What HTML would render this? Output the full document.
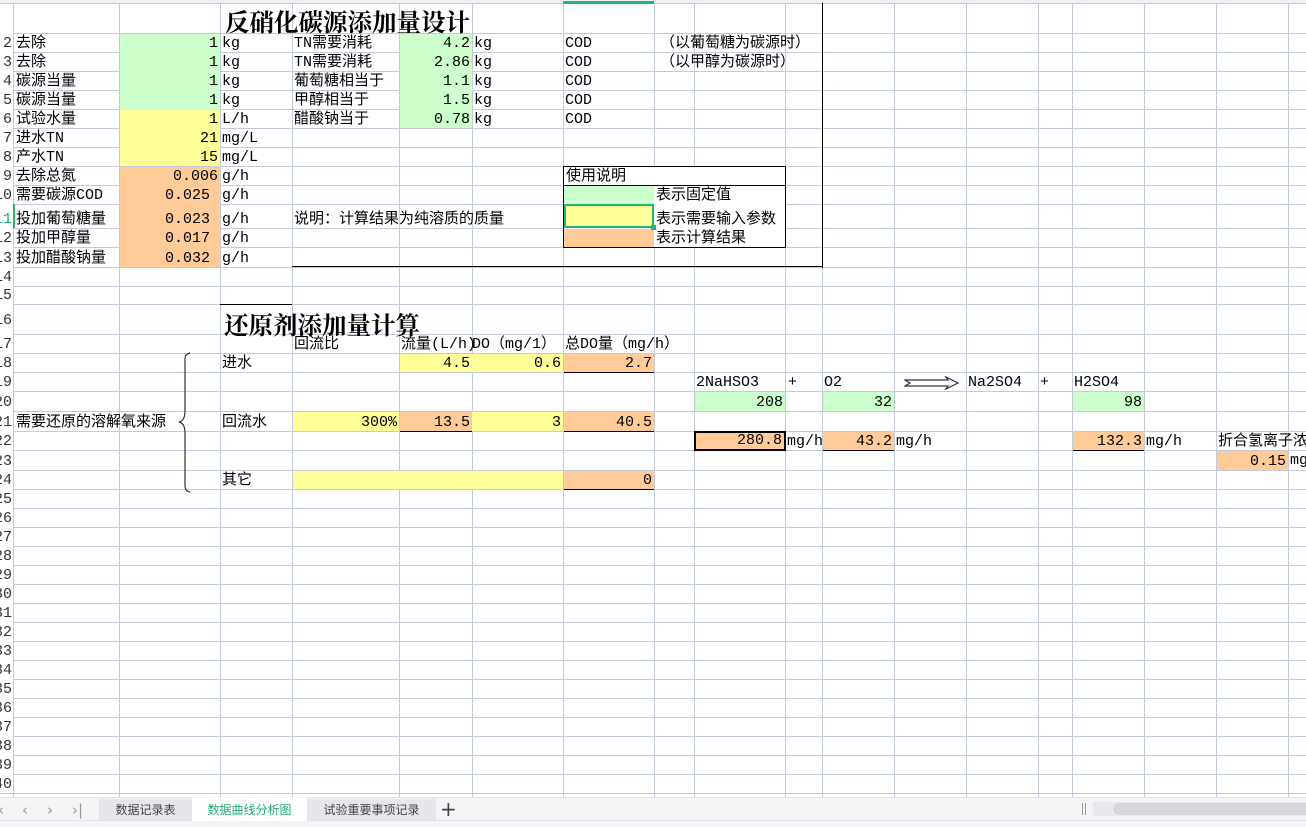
<!DOCTYPE html>
<html><head><meta charset="utf-8">
<style>
*{margin:0;padding:0}
body{width:1306px;height:827px;overflow:hidden;background:#fff;position:relative;font-family:"Liberation Mono","Noto Sans CJK SC",sans-serif}
.v{position:absolute;top:0;height:797px;width:1px;background:#c3cad9}
.h{position:absolute;left:0;width:1306px;height:1px;background:#c3cad9}
.c{position:absolute;display:flex;align-items:flex-end;font-size:15px;line-height:15px;color:#000;white-space:nowrap;padding:0 2px 1px;box-sizing:border-box;z-index:2}
.r{justify-content:flex-end}
.g{background:#ccffcc}.y{background:#ffff99}.o{background:#ffcc99}
.bb{border-bottom:1px solid #000}
.rn{position:absolute;left:0;width:13px;overflow:hidden;z-index:3;background:#fff}
.rn span{position:absolute;right:1px;bottom:1px;font-size:15px;line-height:15px;color:#333}
.t{position:absolute;font-family:"Liberation Serif","Noto Serif CJK SC",serif;font-weight:bold;font-size:24.5px;z-index:2;white-space:nowrap}
.blk{position:absolute;background:#000;z-index:4}
</style></head><body>

<div class="v" style="left:13px"></div><div class="v" style="left:119px"></div><div class="v" style="left:220px"></div><div class="v" style="left:292px"></div><div class="v" style="left:399px"></div><div class="v" style="left:472px"></div><div class="v" style="left:563px"></div><div class="v" style="left:654px"></div><div class="v" style="left:694px"></div><div class="v" style="left:785px"></div><div class="v" style="left:822px"></div><div class="v" style="left:894px"></div><div class="v" style="left:966px"></div><div class="v" style="left:1038px"></div><div class="v" style="left:1072px"></div><div class="v" style="left:1144px"></div><div class="v" style="left:1216px"></div><div class="v" style="left:1288px"></div>

<div class="h" style="top:3px"></div><div class="h" style="top:33px"></div><div class="h" style="top:52px"></div><div class="h" style="top:71px"></div><div class="h" style="top:90px"></div><div class="h" style="top:109px"></div><div class="h" style="top:128px"></div><div class="h" style="top:147px"></div><div class="h" style="top:166px"></div><div class="h" style="top:185px"></div><div class="h" style="top:204px"></div><div class="h" style="top:228px"></div><div class="h" style="top:247px"></div><div class="h" style="top:267px"></div><div class="h" style="top:286px"></div><div class="h" style="top:304px"></div><div class="h" style="top:334px"></div><div class="h" style="top:353px"></div><div class="h" style="top:372px"></div><div class="h" style="top:391px"></div><div class="h" style="top:411px"></div><div class="h" style="top:431px"></div><div class="h" style="top:450px"></div><div class="h" style="top:470px"></div>
<div style="position:absolute;left:0;top:489px;width:1306px;height:308px;background:repeating-linear-gradient(to bottom,#c3cad9 0,#c3cad9 1px,transparent 1px,transparent 19px)"></div>

<div style="position:absolute;left:0;top:0;width:1306px;height:3px;background:#eef0f4;z-index:3"></div>
<div style="position:absolute;left:563px;top:1px;width:91px;height:3px;background:#22b573;z-index:4"></div>

<div class="rn" style="top:33px;height:19px"><span>2</span></div><div class="rn" style="top:52px;height:19px"><span>3</span></div><div class="rn" style="top:71px;height:19px"><span>4</span></div><div class="rn" style="top:90px;height:19px"><span>5</span></div><div class="rn" style="top:109px;height:19px"><span>6</span></div><div class="rn" style="top:128px;height:19px"><span>7</span></div><div class="rn" style="top:147px;height:19px"><span>8</span></div><div class="rn" style="top:166px;height:19px"><span>9</span></div><div class="rn" style="top:185px;height:19px"><span>10</span></div><div class="rn" style="top:204px;height:24px"><span style="color:#1faa6d">11</span></div><div class="rn" style="top:228px;height:19px"><span>12</span></div><div class="rn" style="top:247px;height:20px"><span>13</span></div><div class="rn" style="top:267px;height:19px"><span>14</span></div><div class="rn" style="top:286px;height:18px"><span>15</span></div><div class="rn" style="top:304px;height:30px"><span style="bottom:6px">16</span></div><div class="rn" style="top:334px;height:19px"><span>17</span></div><div class="rn" style="top:353px;height:19px"><span>18</span></div><div class="rn" style="top:372px;height:19px"><span>19</span></div><div class="rn" style="top:391px;height:20px"><span>20</span></div><div class="rn" style="top:411px;height:20px"><span>21</span></div><div class="rn" style="top:431px;height:19px"><span>22</span></div><div class="rn" style="top:450px;height:20px"><span>23</span></div><div class="rn" style="top:470px;height:19px"><span>24</span></div><div class="rn" style="top:489px;height:19px"><span>25</span></div><div class="rn" style="top:508px;height:19px"><span>26</span></div><div class="rn" style="top:527px;height:19px"><span>27</span></div><div class="rn" style="top:546px;height:19px"><span>28</span></div><div class="rn" style="top:565px;height:19px"><span>29</span></div><div class="rn" style="top:584px;height:19px"><span>30</span></div><div class="rn" style="top:603px;height:19px"><span>31</span></div><div class="rn" style="top:622px;height:19px"><span>32</span></div><div class="rn" style="top:641px;height:19px"><span>33</span></div><div class="rn" style="top:660px;height:19px"><span>34</span></div><div class="rn" style="top:679px;height:19px"><span>35</span></div><div class="rn" style="top:698px;height:19px"><span>36</span></div><div class="rn" style="top:717px;height:19px"><span>37</span></div><div class="rn" style="top:736px;height:19px"><span>38</span></div><div class="rn" style="top:755px;height:19px"><span>39</span></div><div class="rn" style="top:774px;height:19px"><span>40</span></div>
<div style="position:absolute;left:13px;top:204px;width:2px;height:24px;background:#22b573;z-index:4"></div>

<div class="t" style="left:225px;top:4px">反硝化碳源添加量设计</div>

<div class="c g" style="left:120px;top:34px;width:100px;height:94px"></div>
<div class="c y" style="left:120px;top:110px;width:100px;height:56px"></div>
<div class="c o" style="left:120px;top:167px;width:100px;height:100px"></div>
<div class="c g" style="left:400px;top:34px;width:72px;height:94px"></div>

<div class="c" style="left:14px;top:33px;height:19px">去除</div><div class="c r" style="left:119px;top:33px;width:101px;height:19px">1</div><div class="c" style="left:220px;top:33px;height:19px">kg</div><div class="c" style="left:292px;top:33px;height:19px">TN需要消耗</div><div class="c r" style="left:399px;top:33px;width:73px;height:19px">4.2</div><div class="c" style="left:472px;top:33px;height:19px">kg</div><div class="c" style="left:563px;top:33px;height:19px">COD</div><div class="c" style="left:658px;top:33px;height:19px">（以葡萄糖为碳源时）</div>
<div class="c" style="left:14px;top:52px;height:19px">去除</div><div class="c r" style="left:119px;top:52px;width:101px;height:19px">1</div><div class="c" style="left:220px;top:52px;height:19px">kg</div><div class="c" style="left:292px;top:52px;height:19px">TN需要消耗</div><div class="c r" style="left:399px;top:52px;width:73px;height:19px">2.86</div><div class="c" style="left:472px;top:52px;height:19px">kg</div><div class="c" style="left:563px;top:52px;height:19px">COD</div><div class="c" style="left:658px;top:52px;height:19px">（以甲醇为碳源时）</div>
<div class="c" style="left:14px;top:71px;height:19px">碳源当量</div><div class="c r" style="left:119px;top:71px;width:101px;height:19px">1</div><div class="c" style="left:220px;top:71px;height:19px">kg</div><div class="c" style="left:292px;top:71px;height:19px">葡萄糖相当于</div><div class="c r" style="left:399px;top:71px;width:73px;height:19px">1.1</div><div class="c" style="left:472px;top:71px;height:19px">kg</div><div class="c" style="left:563px;top:71px;height:19px">COD</div>
<div class="c" style="left:14px;top:90px;height:19px">碳源当量</div><div class="c r" style="left:119px;top:90px;width:101px;height:19px">1</div><div class="c" style="left:220px;top:90px;height:19px">kg</div><div class="c" style="left:292px;top:90px;height:19px">甲醇相当于</div><div class="c r" style="left:399px;top:90px;width:73px;height:19px">1.5</div><div class="c" style="left:472px;top:90px;height:19px">kg</div><div class="c" style="left:563px;top:90px;height:19px">COD</div>
<div class="c" style="left:14px;top:109px;height:19px">试验水量</div><div class="c r" style="left:119px;top:109px;width:101px;height:19px">1</div><div class="c" style="left:220px;top:109px;height:19px">L/h</div><div class="c" style="left:292px;top:109px;height:19px">醋酸钠当于</div><div class="c r" style="left:399px;top:109px;width:73px;height:19px">0.78</div><div class="c" style="left:472px;top:109px;height:19px">kg</div><div class="c" style="left:563px;top:109px;height:19px">COD</div>
<div class="c" style="left:14px;top:128px;height:19px">进水TN</div><div class="c r" style="left:119px;top:128px;width:101px;height:19px">21</div><div class="c" style="left:220px;top:128px;height:19px">mg/L</div>
<div class="c" style="left:14px;top:147px;height:19px">产水TN</div><div class="c r" style="left:119px;top:147px;width:101px;height:19px">15</div><div class="c" style="left:220px;top:147px;height:19px">mg/L</div>
<div class="c" style="left:14px;top:166px;height:19px">去除总氮</div><div class="c r" style="left:119px;top:166px;width:101px;height:19px">0.006</div><div class="c" style="left:220px;top:166px;height:19px">g/h</div>
<div class="c" style="left:14px;top:185px;height:19px">需要碳源COD</div><div class="c r" style="left:119px;top:185px;width:101px;height:19px;padding-right:10px">0.025</div><div class="c" style="left:220px;top:185px;height:19px">g/h</div>
<div class="c" style="left:14px;top:204px;height:24px">投加葡萄糖量</div><div class="c r" style="left:119px;top:204px;width:101px;height:24px;padding-right:10px">0.023</div><div class="c" style="left:220px;top:204px;height:24px">g/h</div><div class="c" style="left:292px;top:204px;height:24px">说明：计算结果为纯溶质的质量</div>
<div class="c" style="left:14px;top:228px;height:19px">投加甲醇量</div><div class="c r" style="left:119px;top:228px;width:101px;height:19px;padding-right:10px">0.017</div><div class="c" style="left:220px;top:228px;height:19px">g/h</div>
<div class="c" style="left:14px;top:247px;height:20px">投加醋酸钠量</div><div class="c r" style="left:119px;top:247px;width:101px;height:20px;padding-right:10px">0.032</div><div class="c" style="left:220px;top:247px;height:20px">g/h</div>

<div style="position:absolute;left:563px;top:166px;width:223px;height:82px;border:1px solid #000;box-sizing:border-box;background:#fff;z-index:2"></div>
<div style="position:absolute;left:563px;top:185px;width:222px;height:1px;background:#000;z-index:3"></div>
<div class="c g" style="left:564px;top:186px;width:90px;height:18px"></div>
<div class="c y" style="left:564px;top:204px;width:90px;height:24px;border:2px solid #22b573"></div>
<div style="position:absolute;left:651px;top:225px;width:5px;height:5px;background:#22b573;z-index:4"></div>
<div class="c o" style="left:564px;top:229px;width:90px;height:18px"></div>
<div class="c" style="left:564px;top:166px;height:19px;z-index:3">使用说明</div>
<div class="c" style="left:654px;top:185px;height:19px;z-index:3">表示固定值</div>
<div class="c" style="left:654px;top:204px;height:24px;z-index:3">表示需要输入参数</div>
<div class="c" style="left:654px;top:228px;height:19px;z-index:3">表示计算结果</div>

<div class="blk" style="left:822px;top:3px;width:1px;height:265px"></div>
<div class="blk" style="left:292px;top:266px;width:531px;height:1px"></div>
<div class="blk" style="left:220px;top:304px;width:72px;height:1px"></div>

<div class="t" style="left:224px;top:307px">还原剂添加量计算</div>

<div class="c" style="left:292px;top:334px;height:19px">回流比</div><div class="c" style="left:399px;top:334px;height:19px">流量(L/h)</div><div class="c" style="left:470px;top:334px;height:19px">DO（mg/1）</div><div class="c" style="left:563px;top:334px;height:19px">总DO量（mg/h）</div>
<div class="c" style="left:220px;top:353px;height:19px">进水</div>
<div class="c r y" style="left:400px;top:354px;width:72px;height:18px">4.5</div>
<div class="c r y" style="left:472px;top:354px;width:91px;height:18px">0.6</div>
<div class="c r o bb" style="left:564px;top:354px;width:90px;height:19px">2.7</div>

<div class="c" style="left:694px;top:372px;height:19px">2NaHSO3</div><div class="c" style="left:786px;top:372px;height:19px">+</div><div class="c" style="left:822px;top:372px;height:19px">O2</div>
<svg style="position:absolute;left:904px;top:376px;z-index:2" width="56" height="14"><path d="M1 4 L44 4 L42 1 L54 7 L42 13 L44 10 L1 10 L6 7 Z" fill="#fff" stroke="#333" stroke-width="1.2"/></svg>
<div class="c" style="left:966px;top:372px;height:19px">Na2SO4</div><div class="c" style="left:1038px;top:372px;height:19px">+</div><div class="c" style="left:1072px;top:372px;height:19px">H2SO4</div>

<div class="c r g" style="left:695px;top:392px;width:90px;height:19px">208</div>
<div class="c r g" style="left:823px;top:392px;width:71px;height:19px">32</div>
<div class="c r g" style="left:1073px;top:392px;width:71px;height:19px">98</div>

<div class="c" style="left:14px;top:411px;height:20px">需要还原的溶解氧来源</div>
<div class="c" style="left:220px;top:411px;height:20px">回流水</div>
<div class="c r y" style="left:293px;top:412px;width:106px;height:19px">300%</div>
<div class="c r o bb" style="left:400px;top:412px;width:72px;height:20px">13.5</div>
<div class="c r y" style="left:472px;top:412px;width:91px;height:19px">3</div>
<div class="c r o bb" style="left:564px;top:412px;width:90px;height:20px">40.5</div>

<div class="c r o" style="left:694px;top:431px;width:92px;height:20px;border:2px solid #000">280.8</div>
<div class="c" style="left:785px;top:431px;height:19px">mg/h</div>
<div class="c r o bb" style="left:823px;top:432px;width:71px;height:19px">43.2</div>
<div class="c" style="left:894px;top:431px;height:19px">mg/h</div>
<div class="c r o bb" style="left:1073px;top:432px;width:71px;height:19px">132.3</div>
<div class="c" style="left:1144px;top:431px;height:19px">mg/h</div>
<div class="c" style="left:1216px;top:431px;height:19px;width:90px;overflow:hidden">折合氢离子浓度</div>
<div class="c r o" style="left:1217px;top:451px;width:71px;height:19px">0.15</div>
<div class="c" style="left:1288px;top:450px;height:19px;width:18px;overflow:hidden">mg</div>

<div class="c" style="left:220px;top:470px;height:19px">其它</div>
<div class="c y" style="left:293px;top:471px;width:270px;height:18px"></div>
<div class="c r o bb" style="left:564px;top:471px;width:90px;height:19px">0</div>

<svg style="position:absolute;left:176px;top:352px;z-index:3" width="16" height="142"><path d="M14 1 C8 2 9 6 9 14 L9 58 C9 66 7 69 3 70 C7 71 9 74 9 82 L9 126 C9 134 8 139 14 140" fill="none" stroke="#333" stroke-width="1.2"/></svg>

<div style="position:absolute;left:0;top:797px;width:1306px;height:30px;background:#f4f5f7;z-index:5;border-top:1px solid #dfe2e8;box-sizing:border-box"></div>
<div style="position:absolute;left:0;top:820px;width:1306px;height:1px;background:#e1e3e8;z-index:6"></div>
<div style="position:absolute;left:0;top:800px;height:20px;z-index:6;font:15px/20px 'DejaVu Sans',sans-serif;color:#999">
<span style="position:absolute;left:-2px">‹</span><span style="position:absolute;left:22px">‹</span><span style="position:absolute;left:47px">›</span><span style="position:absolute;left:72px">›|</span></div>
<div style="position:absolute;left:99px;top:799px;width:93px;height:21px;background:#e6e7eb;z-index:6;font:12px/21px 'Noto Sans CJK SC',sans-serif;color:#444;text-align:center">数据记录表</div>
<div style="position:absolute;left:192px;top:797px;width:115px;height:24px;background:#fff;z-index:6;font:12px/25px 'Noto Sans CJK SC',sans-serif;color:#1faa6d;text-align:center">数据曲线分析图</div>
<div style="position:absolute;left:307px;top:799px;width:129px;height:21px;background:#e6e7eb;z-index:6;font:12px/21px 'Noto Sans CJK SC',sans-serif;color:#444;text-align:center">试验重要事项记录</div>
<div style="position:absolute;left:440px;top:798px;z-index:6;font:20px/22px 'DejaVu Sans',sans-serif;color:#444">+</div>
<div style="position:absolute;left:1082px;top:803px;width:1px;height:12px;background:#999;z-index:6"></div>
<div style="position:absolute;left:1085px;top:803px;width:1px;height:12px;background:#999;z-index:6"></div>
<div style="position:absolute;left:1093px;top:802px;width:213px;height:14px;background:#e8e9ec;z-index:6"></div>
<div style="position:absolute;left:1113px;top:803px;width:193px;height:12px;background:#d4d6dc;border-radius:6px 0 0 6px;z-index:7"></div>
</body></html>
